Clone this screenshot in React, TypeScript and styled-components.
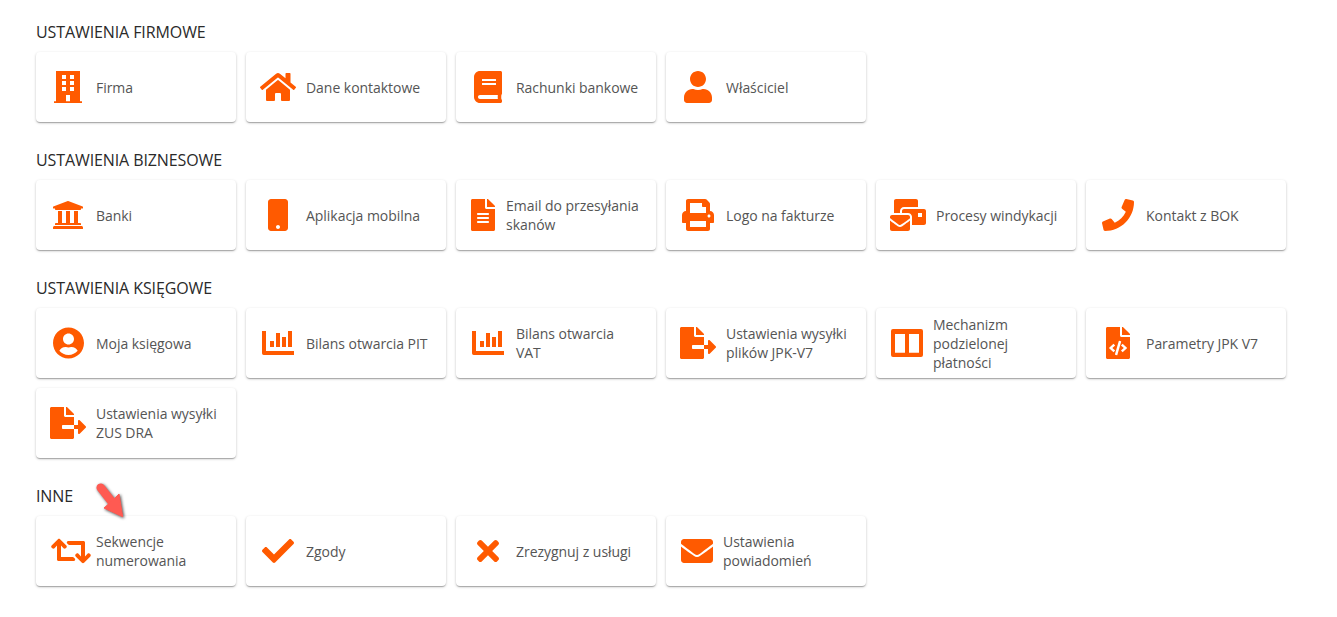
import React from "react";
import styled, { createGlobalStyle } from "styled-components";
import {
  FaHome, FaBook, FaUser, FaUniversity, FaMobile, FaFileAlt, FaPrint, FaMailBulk, FaPhone,
  FaUserCircle, FaFileExport, FaFileCode, FaRetweet, FaCheck, FaTimes, FaEnvelope,
} from "react-icons/fa";

const Global = createGlobalStyle`
  html, body { margin: 0; background: #fff; }
  body { font-family: "Open Sans", "Liberation Sans", sans-serif; }
`;

const Page = styled.main`
  padding: 22px 36px 0;
  width: 1337px;
  height: 617px;
  box-sizing: border-box;
  overflow: hidden;
`;

const Section = styled.section`
  position: relative;
  margin-bottom: 28px;
`;

const Heading = styled.h2`
  margin: 0 0 10px;
  font-size: 16px;
  line-height: 20px;
  font-weight: 400;
  letter-spacing: -0.1px;
  color: #2a2a2a;
  text-transform: uppercase;
`;

const Cards = styled.div`
  display: flex;
  flex-wrap: wrap;
  gap: 10px;
`;

const Card = styled.a`
  display: flex;
  align-items: center;
  width: 200px;
  height: 70px;
  box-sizing: border-box;
  padding: 0 15px;
  background: #fff;
  border-radius: 4px;
  box-shadow: 0 1px 3px rgba(0, 0, 0, 0.2), 0 1px 1px rgba(0, 0, 0, 0.14), 0 2px 1px -1px rgba(0, 0, 0, 0.12);
`;

const IconSlot = styled.span<{ $width: number; $gap: number; $icon: number }>`
  flex: none;
  display: flex;
  justify-content: center;
  width: ${(p) => p.$width}px;
  margin-right: ${(p) => p.$gap}px;
  color: #ff5a00;
  svg { flex: none; display: block; height: 32px; width: ${(p) => p.$icon}px; }
`;

const Label = styled.span`
  font-size: 14px;
  line-height: 19px;
  letter-spacing: -0.04px;
  color: #555;
`;

const PointerArrow = styled.svg`
  position: absolute;
  left: 56px;
  top: -8px;
  width: 44px;
  height: 44px;
  overflow: visible;
  filter: drop-shadow(1px 1px 1.5px rgba(0, 0, 0, 0.7));
`;

const BuildingIcon = () => (
  <svg viewBox="0 0 84 96" fill="currentColor">
    <path fillRule="evenodd" d="M6 0h72v91h6v5H0v-5h6zM24 12v12h12V12zM48 12v12h12V12zM24 30v12h12V30zM48 30v12h12V30zM24 48v12h12V48zM48 48v12h12V48zM36 72v19h12V72z" />
  </svg>
);

const BarsIcon = () => (
  <svg viewBox="0 0 96 96" fill="currentColor">
    <path d="M0 12h12v60h84v12H5a5 5 0 0 1-5-5z" />
    <path d="M24 42h12v18H24zM42 18h12v42H42zM60 30h12v30H60zM78 12h12v48H78z" />
  </svg>
);

const ColumnsIcon = () => (
  <svg viewBox="0 0 96 96" fill="currentColor">
    <path fillRule="evenodd" d="M6 6h84a6 6 0 0 1 6 6v72a6 6 0 0 1-6 6H6a6 6 0 0 1-6-6V12a6 6 0 0 1 6-6zM12 21v56h30V21zM54 21v56h30V21z" />
  </svg>
);

type Item = { label: string; icon: React.ReactNode; iconWidth: number; width?: number; gap?: number };

const sections: { title: string; items: Item[]; arrow?: boolean }[] = [
  {
    title: "Ustawienia firmowe",
    items: [
      { label: "Firma", icon: <BuildingIcon />, iconWidth: 28 },
      { label: "Dane kontaktowe", icon: <FaHome />, iconWidth: 36 },
      { label: "Rachunki bankowe", icon: <FaBook />, iconWidth: 28 },
      { label: "Właściciel", icon: <FaUser />, iconWidth: 28 },
    ],
  },
  {
    title: "Ustawienia biznesowe",
    items: [
      { label: "Banki", icon: <FaUniversity />, iconWidth: 32 },
      { label: "Aplikacja mobilna", icon: <FaMobile />, iconWidth: 20 },
      { label: "Email do przesyłania skanów", icon: <FaFileAlt />, iconWidth: 24, width: 24 },
      { label: "Logo na fakturze", icon: <FaPrint />, iconWidth: 32 },
      { label: "Procesy windykacji", icon: <FaMailBulk />, iconWidth: 36 },
      { label: "Kontakt z BOK", icon: <FaPhone />, iconWidth: 32 },
    ],
  },
  {
    title: "Ustawienia księgowe",
    items: [
      { label: "Moja księgowa", icon: <FaUserCircle />, iconWidth: 31 },
      { label: "Bilans otwarcia PIT", icon: <BarsIcon />, iconWidth: 32 },
      { label: "Bilans otwarcia VAT", icon: <BarsIcon />, iconWidth: 32 },
      { label: "Ustawienia wysyłki plików JPK-V7", icon: <FaFileExport />, iconWidth: 36 },
      { label: "Mechanizm podzielonej płatności", icon: <ColumnsIcon />, iconWidth: 32, width: 32, gap: 10 },
      { label: "Parametry JPK V7", icon: <FaFileCode />, iconWidth: 24 },
      { label: "Ustawienia wysyłki ZUS DRA", icon: <FaFileExport />, iconWidth: 36 },
    ],
  },
  {
    title: "Inne",
    arrow: true,
    items: [
      { label: "Sekwencje numerowania", icon: <FaRetweet />, iconWidth: 40, width: 40, gap: 5 },
      { label: "Zgody", icon: <FaCheck />, iconWidth: 32 },
      { label: "Zrezygnuj z usługi", icon: <FaTimes />, iconWidth: 22 },
      { label: "Ustawienia powiadomień", icon: <FaEnvelope />, iconWidth: 32, width: 32, gap: 10 },
    ],
  },
];

export default function App() {
  return (
    <Page>
      <Global />
      {sections.map((section) => (
        <Section key={section.title}>
          <Heading>{section.title}</Heading>
          <Cards>
            {section.items.map((item) => (
              <Card key={item.label}>
                <IconSlot $width={item.width ?? 34} $gap={item.gap ?? 11} $icon={item.iconWidth}>{item.icon}</IconSlot>
                <Label>{item.label}</Label>
              </Card>
            ))}
          </Cards>
          {section.arrow && (
            <PointerArrow viewBox="0 0 44 44">
              <path d="M8.7 9.7L20 24" stroke="#ff5a52" strokeWidth="8.5" strokeLinecap="round" fill="none" />
              <path d="M12 30L30.7 38.7L27 16L20 23Z" fill="#ff5a52" stroke="#ff5a52" strokeWidth="1" strokeLinejoin="round" />
            </PointerArrow>
          )}
        </Section>
      ))}
    </Page>
  );
}
